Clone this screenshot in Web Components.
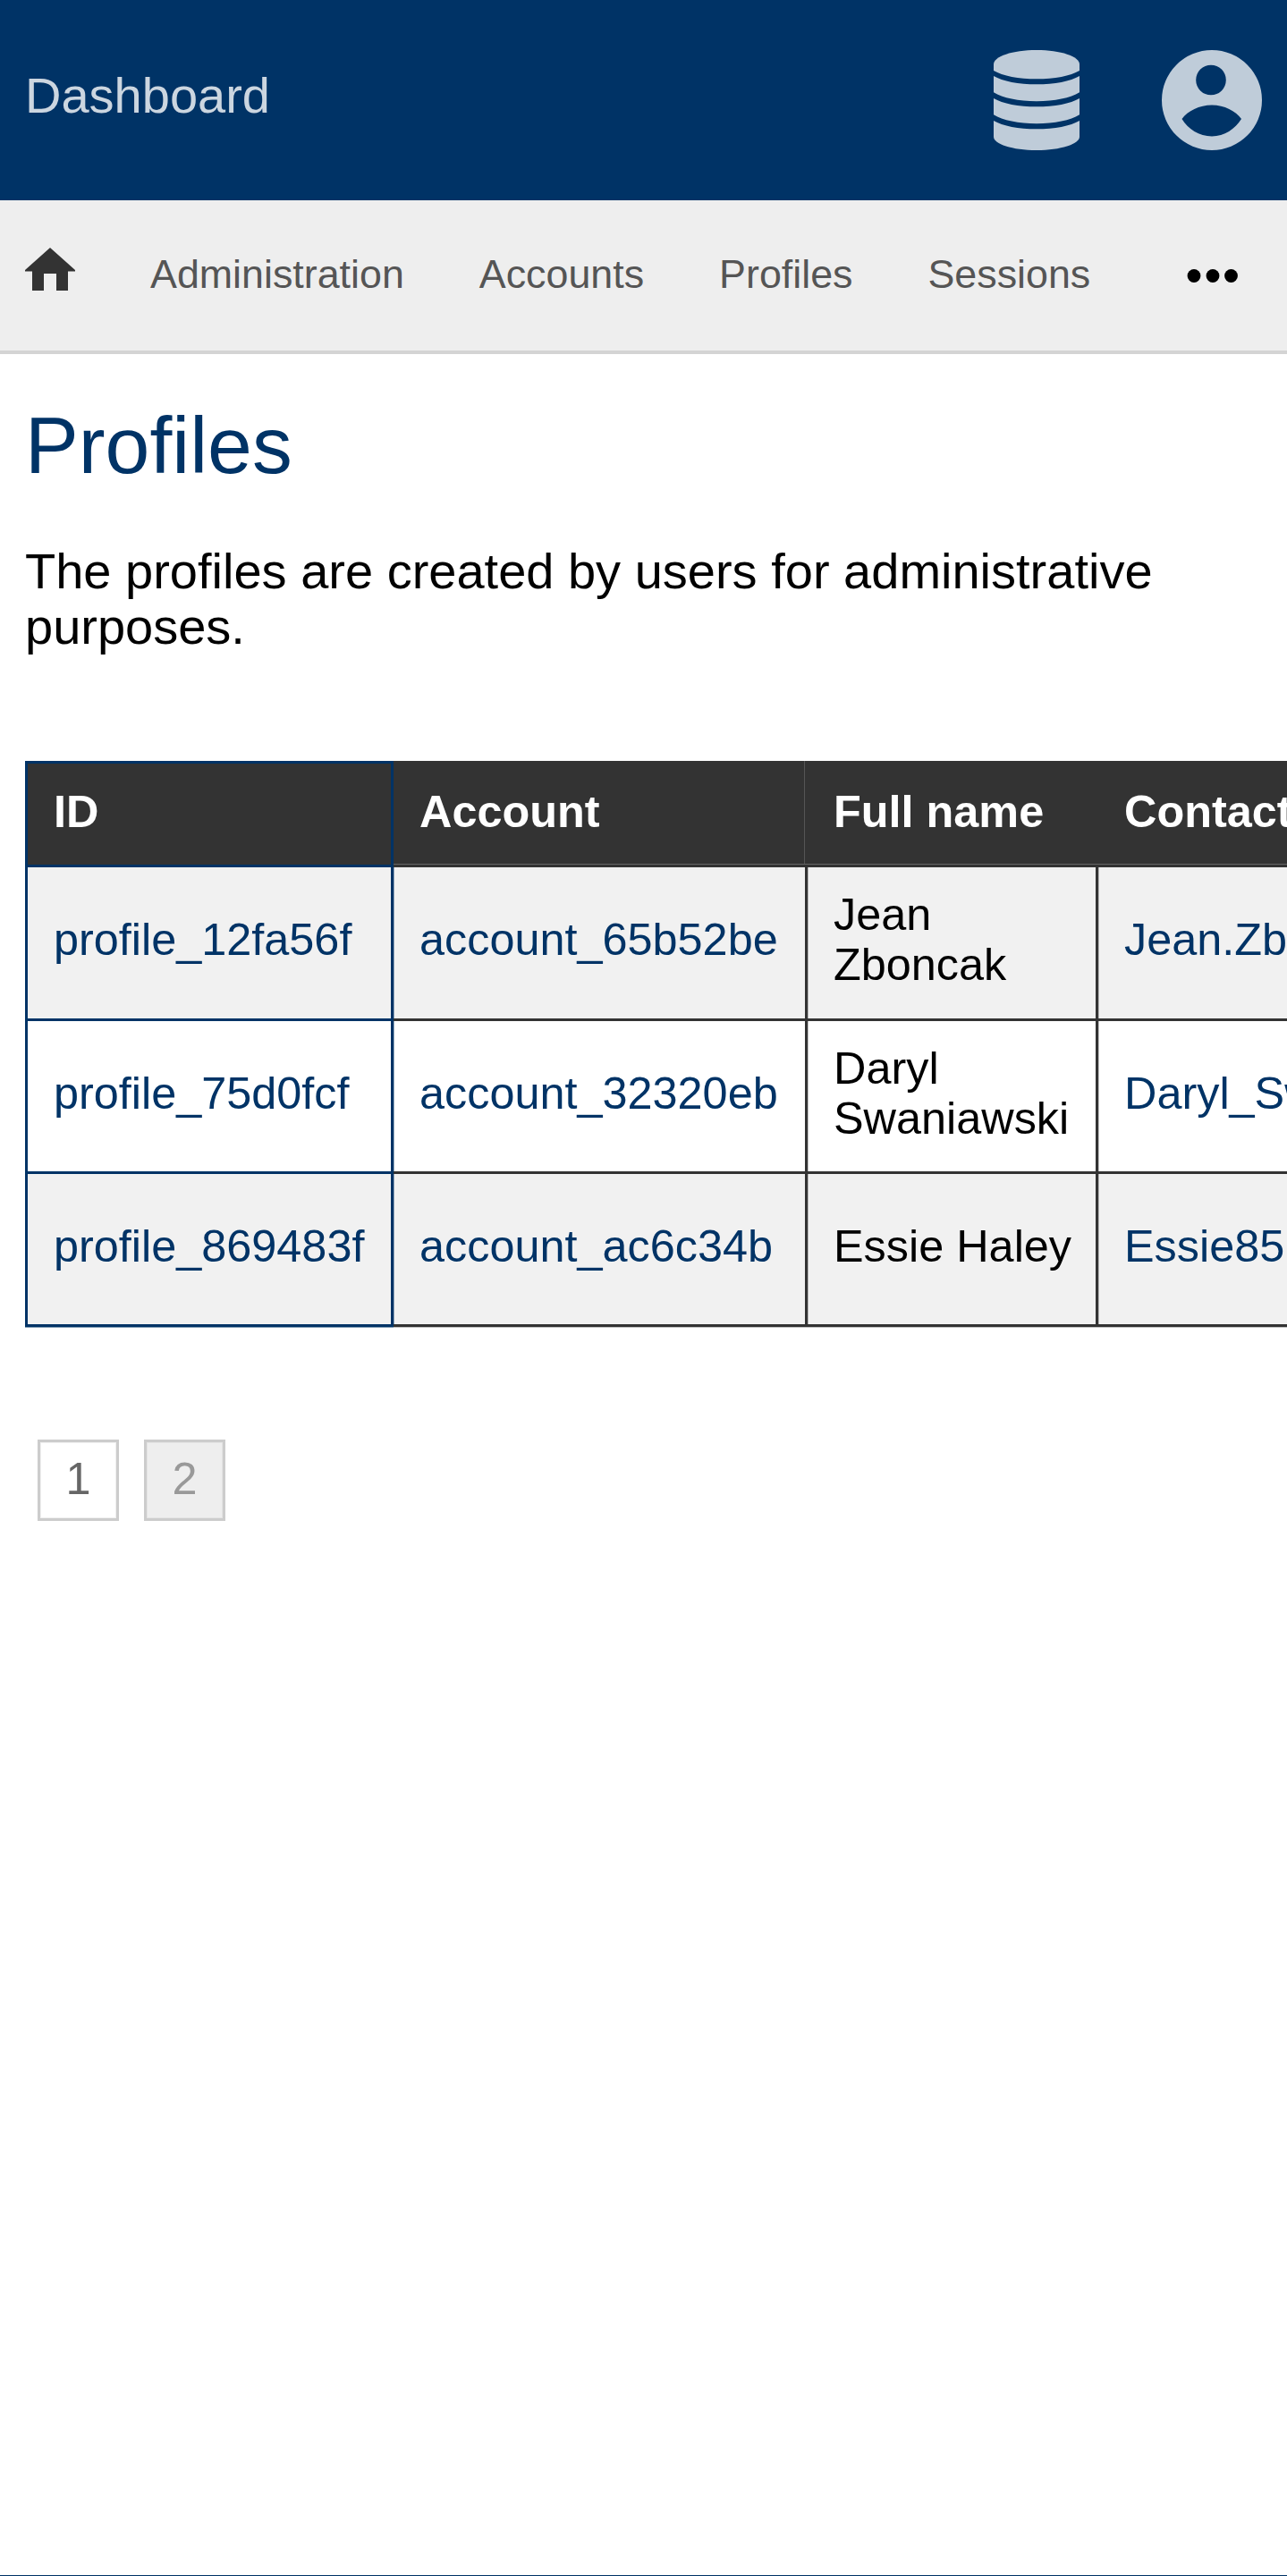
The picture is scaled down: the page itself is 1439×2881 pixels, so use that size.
<!DOCTYPE html>
<html lang="en">
<head>
<meta charset="utf-8">
<title>Profiles</title>
<style>
  html, body { margin: 0; padding: 0; background: #fff; }
  body {
    font-family: "Liberation Sans", Arial, sans-serif;
    height: 2881px;
    overflow: hidden;
    display: flex;
    flex-direction: column;
  }
  page-content { flex: 1; }
</style>
</head>
<body>
  <app-header>Dashboard</app-header>
  <app-nav>
    <nav-link>Administration</nav-link>
    <nav-link>Accounts</nav-link>
    <nav-link>Profiles</nav-link>
    <nav-link>Sessions</nav-link>
  </app-nav>
  <page-content>
    <span slot="title">Profiles</span>
    The profiles are created by users for administrative purposes.
    <profile-table slot="table"></profile-table>
    <page-pager slot="pager"></page-pager>
  </page-content>
  <app-footer></app-footer>

<script>
window.customElements.define('app-header', class extends HTMLElement {
  constructor() {
    super();
    const root = this.attachShadow({ mode: 'open' });
    root.innerHTML = `
    <style>
      :host {
        display: flex;
        align-items: center;
        height: 224px;
        padding: 0 28px;
        background-color: #003366;
        color: #ccd6e0;
        font-size: 56px;
      }
      .brand { flex: 1; padding-bottom: 12px; }
      svg { display: block; fill: #bfccd9; }
      .db { margin-right: 92px; }
    </style>
    <div class="brand"><slot></slot></div>
    <svg class="db" width="96" height="112" viewBox="0 0 96 112">
      <path d="M0 16C0 7 21 0 48 0S96 7 96 16V23C86 29 68 32.3 48 32.3S10 29 0 23Z"/>
      <path d="M0 29C10 35 28 38.3 48 38.3S86 35 96 29V47.3C86 53.5 68 57.3 48 57.3S10 53.5 0 47.3Z"/>
      <path d="M0 54C10 60 28 63.3 48 63.3S86 60 96 54V72.3C86 78.5 68 82.3 48 82.3S10 78.5 0 72.3Z"/>
      <path d="M0 79C10 85 28 88.3 48 88.3S86 85 96 79V97C96 105 75 112 48 112S0 105 0 97Z"/>
    </svg>
    <svg width="112" height="112" viewBox="0 0 112 112">
      <path fill-rule="evenodd" d="M56 0A56 56 0 1 1 56 112A56 56 0 1 1 56 0ZM55 16.7A16.8 16.8 0 1 0 55 50.3A16.8 16.8 0 1 0 55 16.7ZM22.5 77C29 68 42 61.5 56 61.5S82.5 68 89 77C82 88 70 96.5 56 96.5S29 88 22.5 77Z"/>
    </svg>
    `;
  }
});

window.customElements.define('app-nav', class extends HTMLElement {
  constructor() {
    super();
    const root = this.attachShadow({ mode: 'open' });
    root.innerHTML = `
    <style>
      :host {
        display: flex;
        align-items: center;
        gap: 84px;
        height: 168px;
        padding: 0 48px 0 28px;
        background-color: #eeeeee;
        border-bottom: 4px solid #d4d4d4;
      }
      svg { display: block; flex: none; }
      .home { margin-bottom: 14px; }
      .more { margin-left: auto; }
    </style>
    <svg class="home" width="56" height="48" viewBox="0 0 56 48" fill="#333333">
      <path d="M28 0L56 25V26.5H48V48H35V29H21V48H8V26.5H0V25Z"/>
    </svg>
    <slot></slot>
    <svg class="more" width="64" height="15" viewBox="0 0 64 15" fill="#000000">
      <circle cx="8" cy="7.5" r="7.4"/>
      <circle cx="29" cy="7.5" r="7.4"/>
      <circle cx="49.5" cy="7.5" r="7.4"/>
    </svg>
    `;
  }
});

window.customElements.define('nav-link', class extends HTMLElement {
  constructor() {
    super();
    const root = this.attachShadow({ mode: 'open' });
    root.innerHTML = `
    <style>
      :host { display: block; padding-bottom: 4px; color: #555555; font-size: 44.8px; }
    </style>
    <slot></slot>
    `;
  }
});

window.customElements.define('page-content', class extends HTMLElement {
  constructor() {
    super();
    const root = this.attachShadow({ mode: 'open' });
    root.innerHTML = `
    <style>
      :host { display: block; padding: 0 0 0 28px; color: #000000; }
      h1 {
        margin: 51px 0 0;
        color: #003366;
        font-size: 89.6px;
        font-weight: 400;
        line-height: 103px;
      }
      p {
        margin: 58px 28px 0 0;
        font-size: 56px;
        line-height: 62px;
      }
      .table { margin-top: 119px; }
      .pager { margin-top: 125px; padding-left: 14px; }
    </style>
    <h1><slot name="title"></slot></h1>
    <p><slot></slot></p>
    <div class="table"><slot name="table"></slot></div>
    <div class="pager"><slot name="pager"></slot></div>
    `;
  }
});

const rows = [
  ['profile_12fa56f', 'account_65b52be', 'Jean Zboncak', 'Jean.Zboncak@yahoo.com'],
  ['profile_75d0fcf', 'account_32320eb', 'Daryl Swaniawski', 'Daryl_Swaniawski@gmail.com'],
  ['profile_869483f', 'account_ac6c34b', 'Essie Haley', 'Essie85@hotmail.com'],
];

window.customElements.define('profile-table', class extends HTMLElement {
  constructor() {
    super();
    const root = this.attachShadow({ mode: 'open' });
    const body = rows.map(r => `
      <tr>
        <td><a>${r[0]}</a></td>
        <td><a>${r[1]}</a></td>
        <td>${r[2]}</td>
        <td><a>${r[3]}</a></td>
      </tr>`).join('');
    root.innerHTML = `
    <style>
      :host { display: block; overflow: hidden; padding-bottom: 1px; }
      table {
        width: 1700px;
        table-layout: fixed;
        border-collapse: separate;
        border-spacing: 0;
        font-size: 50.4px;
        line-height: 56px;
      }
      th, td { box-sizing: border-box; text-align: left; padding: 0 0 0 29px; }
      thead tr { height: 116px; }
      tbody tr { height: 171px; }
      tbody tr:first-child { height: 175px; }
      th {
        padding-bottom: 2px;
        background: #333333;
        color: #ffffff;
        font-weight: 700;
        border-bottom: 1px solid #666666;
      }
      th:nth-child(2) { box-shadow: inset -3px 0 #333333, inset -4px 0 #555555; }
      td {
        padding-bottom: 7px;
        border-right: 3px solid #333333;
        border-bottom: 3px solid #333333;
        box-shadow: inset 1px 0 rgba(51, 51, 51, .3);
      }
      tbody tr:nth-child(odd) td { background: #f1f1f1; }
      tbody tr:first-child td { border-top: 3px solid #333333; }
      tbody tr:last-child td { box-shadow: inset 1px 0 rgba(51, 51, 51, .3), 0 1px rgba(51, 51, 51, .3); }
      th:first-child, td:first-child {
        border-left: 3px solid #003366;
        border-right: 3px solid #003366;
      }
      th:first-child { padding-bottom: 5px; border-top: 3px solid #003366; border-bottom: 0; }
      td:first-child { border-bottom-color: #003366; box-shadow: none; }
      tbody tr:first-child td:first-child { border-top-color: #003366; }
      tbody tr:last-child td:first-child { box-shadow: 0 1px rgba(0, 51, 102, .5); }
      td:nth-child(2) { box-shadow: inset 1px 0 rgba(0, 51, 102, .4); }
      tbody tr:last-child td:nth-child(2) { box-shadow: inset 1px 0 rgba(0, 51, 102, .4), 0 1px rgba(51, 51, 51, .3); }
      a { color: #003366; white-space: nowrap; }
    </style>
    <table>
      <colgroup>
        <col style="width:412px">
        <col style="width:463px">
        <col style="width:325px">
        <col style="width:500px">
      </colgroup>
      <thead>
        <tr><th>ID</th><th>Account</th><th>Full name</th><th>Contact</th></tr>
      </thead>
      <tbody>${body}</tbody>
    </table>
    `;
  }
});

window.customElements.define('page-pager', class extends HTMLElement {
  constructor() {
    super();
    const root = this.attachShadow({ mode: 'open' });
    root.innerHTML = `
    <style>
      :host { display: flex; gap: 28px; font-size: 50.4px; }
      span {
        display: flex;
        align-items: center;
        justify-content: center;
        box-sizing: border-box;
        width: 91px;
        height: 91px;
        padding-bottom: 5px;
        border: 3px solid #cccccc;
        box-shadow: inset 0 0 0 1px rgba(204, 204, 204, .3);
        color: #666666;
        background: #ffffff;
      }
      .off { color: #999999; background: #eeeeee; }
    </style>
    <span>1</span>
    <span class="off">2</span>
    `;
  }
});

window.customElements.define('app-footer', class extends HTMLElement {
  constructor() {
    super();
    const root = this.attachShadow({ mode: 'open' });
    root.innerHTML = `
    <style>
      :host { display: block; height: 1px; background-color: #003366; }
    </style>
    `;
  }
});
</script>
</body>
</html>
